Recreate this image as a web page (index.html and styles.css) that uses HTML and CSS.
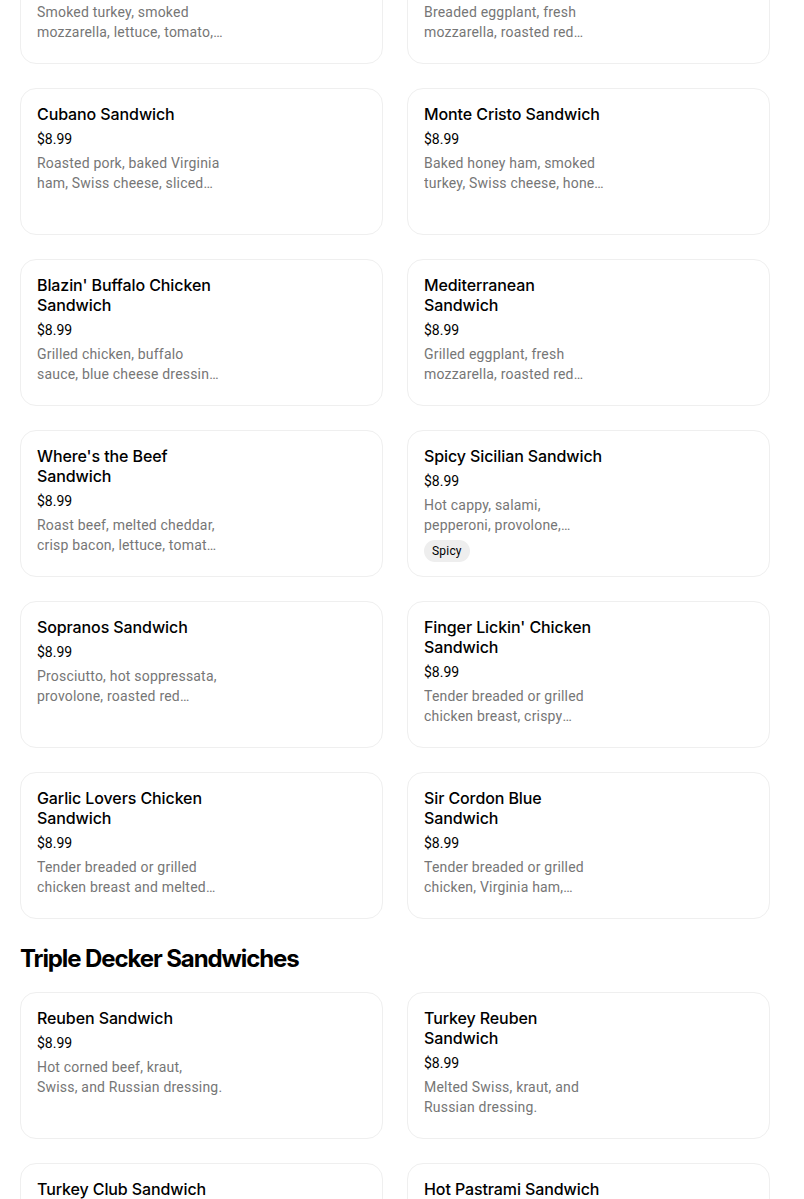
FILE: index.html
```html
<!DOCTYPE html>
<html lang="en">
<head>
<meta charset="utf-8">
<title>Menu</title>
<link rel="stylesheet" href="styles.css">
</head>
<body>
<main class="menu">
  <div class="grid">
    <article class="card"><div class="info"><h3 class="name">Smoked Turkey Mozzarella Sandwich</h3><div class="price">$8.99</div><p class="desc">Smoked turkey, smoked mozzarella, lettuce, tomato, and balsamic glaze.</p></div></article>
    <article class="card"><div class="info"><h3 class="name">Caprese Eggplant Sandwich</h3><div class="price">$8.99</div><p class="desc">Breaded eggplant, fresh mozzarella, roasted red peppers, and pesto.</p></div></article>

    <article class="card"><div class="info"><h3 class="name">Cubano Sandwich</h3><div class="price">$8.99</div><p class="desc">Roasted pork, baked Virginia ham, Swiss cheese, sliced pickles, and mustard.</p></div></article>
    <article class="card"><div class="info"><h3 class="name">Monte Cristo Sandwich</h3><div class="price">$8.99</div><p class="desc">Baked honey ham, smoked turkey, Swiss cheese, honey mustard on French toast.</p></div></article>

    <article class="card"><div class="info"><h3 class="name">Blazin' Buffalo Chicken Sandwich</h3><div class="price">$8.99</div><p class="desc">Grilled chicken, buffalo sauce, blue cheese dressing, lettuce, and tomato.</p></div></article>
    <article class="card"><div class="info"><h3 class="name">Mediterranean Sandwich</h3><div class="price">$8.99</div><p class="desc">Grilled eggplant, fresh mozzarella, roasted red peppers, and olive tapenade.</p></div></article>

    <article class="card"><div class="info"><h3 class="name">Where's the Beef Sandwich</h3><div class="price">$8.99</div><p class="desc">Roast beef, melted cheddar, crisp bacon, lettuce, tomato, and horseradish mayo.</p></div></article>
    <article class="card"><div class="info"><h3 class="name">Spicy Sicilian Sandwich</h3><div class="price">$8.99</div><p class="desc">Hot cappy, salami, pepperoni, provolone, jalapeños, and oil &amp; vinegar.</p><span class="tag">Spicy</span></div></article>

    <article class="card"><div class="info"><h3 class="name">Sopranos Sandwich</h3><div class="price">$8.99</div><p class="desc">Prosciutto, hot soppressata, provolone, roasted red peppers, and balsamic.</p></div></article>
    <article class="card"><div class="info"><h3 class="name">Finger Lickin' Chicken Sandwich</h3><div class="price">$8.99</div><p class="desc">Tender breaded or grilled chicken breast, crispy applewood bacon, cheddar, and ranch.</p></div></article>

    <article class="card"><div class="info"><h3 class="name">Garlic Lovers Chicken Sandwich</h3><div class="price">$8.99</div><p class="desc">Tender breaded or grilled chicken breast and melted mozzarella with garlic aioli.</p></div></article>
    <article class="card"><div class="info"><h3 class="name">Sir Cordon Blue Sandwich</h3><div class="price">$8.99</div><p class="desc">Tender breaded or grilled chicken, Virginia ham, provolone, and honey mustard.</p></div></article>
  </div>

  <section class="section">
    <h2 class="section-title">Triple Decker Sandwiches</h2>
    <div class="grid">
      <article class="card"><div class="info"><h3 class="name">Reuben Sandwich</h3><div class="price">$8.99</div><p class="desc">Hot corned beef, kraut, Swiss, and Russian dressing.</p></div></article>
      <article class="card"><div class="info"><h3 class="name">Turkey Reuben Sandwich</h3><div class="price">$8.99</div><p class="desc">Melted Swiss, kraut, and Russian dressing.</p></div></article>

      <article class="card"><div class="info"><h3 class="name">Turkey Club Sandwich</h3><div class="price">$8.99</div><p class="desc">Smoked turkey, crisp bacon, lettuce, tomato, and mayo.</p></div></article>
      <article class="card"><div class="info"><h3 class="name">Hot Pastrami Sandwich</h3><div class="price">$8.99</div><p class="desc">Hot pastrami, Swiss cheese, and spicy brown mustard.</p></div></article>
    </div>
  </section>
</main>
</body>
</html>
```

FILE: styles.css
```css
* { box-sizing: border-box; }
html, body { margin: 0; padding: 0; background: #ffffff; }
body {
  font-family: "Inter", "Roboto", "Liberation Sans", sans-serif;
  color: #000000;
  overflow: hidden;
}
.menu {
  padding: 0 34px 0 20px;
  margin-top: -83px;
}
.grid {
  display: grid;
  grid-template-columns: 1fr 1fr;
  column-gap: 24px;
  row-gap: 24px;
}
.card {
  height: 147px;
  border: 1px solid #efefef;
  border-radius: 16px;
  padding: 15px 16px;
  background: #ffffff;
}
.info {
  width: 186px;
  display: flex;
  flex-direction: column;
  align-items: flex-start;
}
.name {
  margin: 0;
  font-size: 16px;
  line-height: 20px;
  font-weight: 500;
  letter-spacing: -0.1px;
  color: #000000;
}
.price {
  margin-top: 5px;
  font-family: "Roboto", "Liberation Sans", sans-serif;
  font-size: 14px;
  line-height: 20px;
  color: #000000;
}
.desc {
  margin: 4px 0 0 0;
  font-family: "Roboto", "Liberation Sans", sans-serif;
  font-size: 14px;
  line-height: 20px;
  letter-spacing: 0.2px;
  color: #767676;
  display: -webkit-box;
  -webkit-line-clamp: 2;
  -webkit-box-orient: vertical;
  overflow: hidden;
}
.tag {
  margin-top: 5px;
  display: inline-block;
  height: 22px;
  line-height: 22px;
  padding: 0 8px;
  border-radius: 11px;
  background: #eeeeee;
  font-family: "Roboto", "Liberation Sans", sans-serif;
  font-size: 12px;
  letter-spacing: 0.2px;
  color: #000000;
}
.section { margin-top: 24px; }
.section-title {
  margin: 0 0 17px 0;
  font-size: 24px;
  line-height: 32px;
  font-weight: 700;
  letter-spacing: -1.1px;
}
```
